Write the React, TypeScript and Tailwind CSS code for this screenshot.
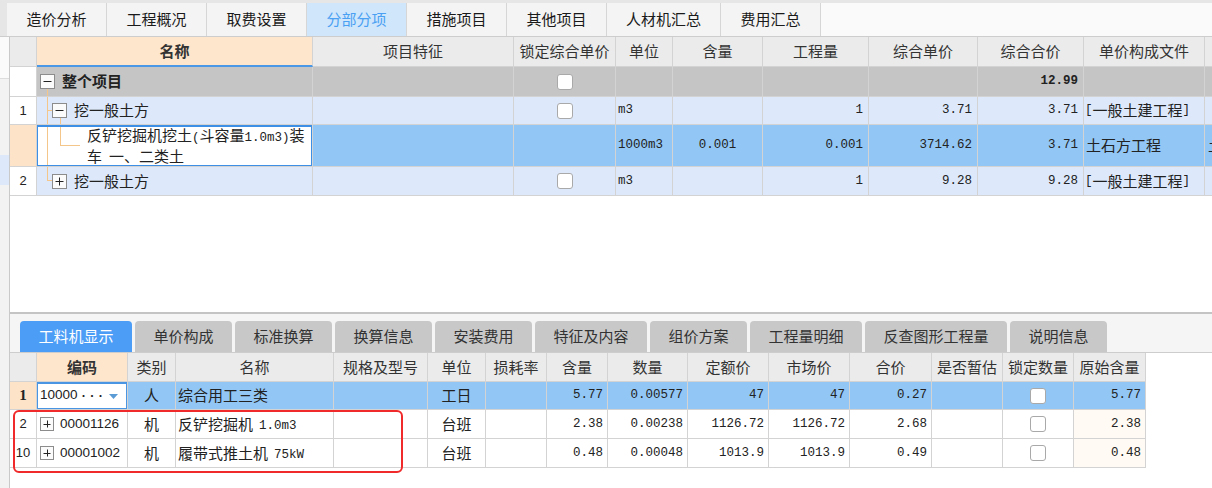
import React from "react";

const TOPG =
  "grid grid-cols-[27px_276px_201px_102px_57px_90px_106px_109px_106px_121px_100px] w-max";
const BOTG =
  "grid grid-cols-[27px_91px_48px_158px_94px_58px_61px_61px_80px_81px_81px_82px_71px_71px_72px] w-max";
const C =
  "border-r border-b border-[#d3d3d3] flex items-center overflow-hidden whitespace-nowrap";
const MONO = "font-['Liberation_Mono',monospace] text-[12.5px] text-[#222]";

function Box({ plus, size = 15 }: { plus?: boolean; size?: number }) {
  const m = size / 2;
  return (
    <svg width={size} height={size} viewBox={`0 0 ${size} ${size}`} className="shrink-0">
      <rect x="0.5" y="0.5" width={size - 1} height={size - 1} fill="#fbfbfb" stroke="#8c8c8c" />
      <path d={`M3.5 ${Math.floor(m) + 0.5}H${size - 3.5}`} stroke="#222" />
      {plus && <path d={`M${Math.floor(m) + 0.5} 3.5V${size - 3.5}`} stroke="#222" />}
    </svg>
  );
}

function Check() {
  return <div className="w-[16px] h-[16px] bg-white border border-[#a9a9a9] rounded-[3px]" />;
}

function Num({ v, bold }: { v: string; bold?: boolean }) {
  return <span className={`${MONO} ${bold ? "font-bold" : ""}`}>{v}</span>;
}

const TopTabs = ["造价分析", "工程概况", "取费设置", "分部分项", "措施项目", "其他项目", "人材机汇总", "费用汇总"];
const BotTabs: [string, string][] = [
  ["工料机显示", "w-[112px]"],
  ["单价构成", "w-[97px]"],
  ["标准换算", "w-[97px]"],
  ["换算信息", "w-[97px]"],
  ["安装费用", "w-[97px]"],
  ["特征及内容", "w-[112px]"],
  ["组价方案", "w-[97px]"],
  ["工程量明细", "w-[112px]"],
  ["反查图形工程量", "w-[142px]"],
  ["说明信息", "w-[97px]"],
];

const LINE = "absolute bg-[#f5c68a]";

export default function App() {
  return (
    <div className="w-[1212px] h-[488px] overflow-hidden bg-[#f0f0f0] flex flex-col font-['Noto_Sans_CJK_SC',sans-serif] text-[15px] text-[#222]">
      {/* top tab bar */}
      <div className="h-[37px] flex pl-[7px] pt-[3px] bg-[#e6e6e6] border-b border-[#cdcdcd] shrink-0">
        {TopTabs.map((t, i) => (
          <div
            key={t}
            className={`h-[33px] flex items-center justify-center border-r border-[#d6d6d6] ${
              i === 6 ? "w-[114px]" : "w-[100px]"
            } ${i === 3 ? "bg-[#cfe6fb] text-[#4aa0f2]" : "bg-[#f4f4f4] text-[#1a1a1a]"}`}
          >
            {t}
          </div>
        ))}
        <div className="flex-1 h-[33px] bg-[#fafafa]" />
      </div>

      <div className="flex flex-1 min-h-0">
        {/* left strip */}
        <div className="w-[10px] shrink-0 flex flex-col border-r border-[#c9c9c9] bg-[#f2f2f2]">
          <div className="h-[42px] bg-[#fafafa] border-b border-[#dcdcdc]" />
          <div className="h-[76px]" />
          <div className="h-[30px] bg-[#dde9fb]" />
          <div className="flex-1" />
        </div>

        <div className="flex-1 min-w-0 flex flex-col">
          {/* top grid */}
          <div className="h-[277px] shrink-0 bg-white overflow-hidden border-b-2 border-[#c4c4c4]">
            {/* header */}
            <div className={`${TOPG} h-[30px] bg-[#ebebeb] text-[#333]`}>
              <div className={C} />
              <div className={`${C} justify-center bg-[#fde6cb] font-bold border-b-2 border-b-[#4a98e6]`}>名称</div>
              <div className={`${C} justify-center`}>项目特征</div>
              <div className={`${C} justify-center`}>锁定综合单价</div>
              <div className={`${C} justify-center`}>单位</div>
              <div className={`${C} justify-center`}>含量</div>
              <div className={`${C} justify-center`}>工程量</div>
              <div className={`${C} justify-center`}>综合单价</div>
              <div className={`${C} justify-center`}>综合合价</div>
              <div className={`${C} justify-center`}>单价构成文件</div>
              <div className={C} />
            </div>
            {/* 整个项目 */}
            <div className={`${TOPG} h-[30px]`}>
              <div className={`${C} bg-white`} />
              <div className={`${C} relative bg-[#c5c5c5] pl-[3px]`}>
                <Box size={15} />
                <span className="ml-[7px] font-bold">整个项目</span>
                <div className={`${LINE} left-[10px] top-[22px] bottom-0 w-px`} />
              </div>
              <div className={`${C} bg-[#c5c5c5]`} />
              <div className={`${C} bg-[#c5c5c5] justify-center`}>
                <Check />
              </div>
              <div className={`${C} bg-[#c5c5c5]`} />
              <div className={`${C} bg-[#c5c5c5]`} />
              <div className={`${C} bg-[#c5c5c5]`} />
              <div className={`${C} bg-[#c5c5c5]`} />
              <div className={`${C} bg-[#c5c5c5] justify-end pr-[5px]`}>
                <Num v="12.99" bold />
              </div>
              <div className={`${C} bg-[#c5c5c5]`} />
              <div className={`${C} bg-[#c5c5c5]`} />
            </div>
            {/* row 1 */}
            <div className={`${TOPG} h-[28px]`}>
              <div className={`${C} bg-white justify-center text-[13px] font-['Liberation_Sans',sans-serif]`}>1</div>
              <div className={`${C} relative bg-[#dde9fb] pl-[15px]`}>
                <div className={`${LINE} left-[10px] top-0 bottom-0 w-px`} />
                <div className={`${LINE} left-[10px] top-[13px] h-px w-[5px]`} />
                <Box />
                <span className="ml-[7px]">挖一般土方</span>
                <div className={`${LINE} left-[23px] top-[21px] bottom-0 w-px`} />
              </div>
              <div className={`${C} bg-[#dde9fb]`} />
              <div className={`${C} bg-[#dde9fb] justify-center`}>
                <Check />
              </div>
              <div className={`${C} bg-[#dde9fb] pl-[2px]`}>
                <Num v="m3" />
              </div>
              <div className={`${C} bg-[#dde9fb]`} />
              <div className={`${C} bg-[#dde9fb] justify-end pr-[5px]`}>
                <Num v="1" />
              </div>
              <div className={`${C} bg-[#dde9fb] justify-end pr-[5px]`}>
                <Num v="3.71" />
              </div>
              <div className={`${C} bg-[#dde9fb] justify-end pr-[5px]`}>
                <Num v="3.71" />
              </div>
              <div className={`${C} bg-[#dde9fb] pl-[1px]`}>
                <Num v="[" />
                一般土建工程
                <Num v="]" />
              </div>
              <div className={`${C} bg-[#dde9fb]`} />
            </div>
            {/* selected row */}
            <div className={`${TOPG} h-[42px]`}>
              <div className={`${C} bg-[#fde4c8]`} />
              <div className={`${C} relative bg-white pl-[50px] leading-[18px]`}>
                <div className={`${LINE} left-[10px] top-0 bottom-0 w-px`} />
                <div className={`${LINE} left-[23px] top-0 h-[20px] w-px`} />
                <div className={`${LINE} left-[23px] top-[20px] h-px w-[20px]`} />
                <div>
                  <div>
                    反铲挖掘机挖土<Num v="(" />斗容量<Num v="1.0m3)" />装
                  </div>
                  <div>
                    车<span className="ml-[7px]">一、二类土</span>
                  </div>
                </div>
                <div className="absolute left-[-1px] right-[-1px] top-0 bottom-[-1px] border-2 border-[#3d8fe6]" />
              </div>
              <div className={`${C} bg-[#92c7f5]`} />
              <div className={`${C} bg-[#92c7f5]`} />
              <div className={`${C} bg-[#92c7f5] pl-[2px]`}>
                <Num v="1000m3" />
              </div>
              <div className={`${C} bg-[#92c7f5] justify-center`}>
                <Num v="0.001" />
              </div>
              <div className={`${C} bg-[#92c7f5] justify-end pr-[5px]`}>
                <Num v="0.001" />
              </div>
              <div className={`${C} bg-[#92c7f5] justify-end pr-[5px]`}>
                <Num v="3714.62" />
              </div>
              <div className={`${C} bg-[#92c7f5] justify-end pr-[5px]`}>
                <Num v="3.71" />
              </div>
              <div className={`${C} bg-[#92c7f5] pl-[2px]`}>土石方工程</div>
              <div className={`${C} bg-[#92c7f5] pl-[3px]`}>土</div>
            </div>
            {/* row 2 */}
            <div className={`${TOPG} h-[29px]`}>
              <div className={`${C} bg-white justify-center text-[13px] font-['Liberation_Sans',sans-serif]`}>2</div>
              <div className={`${C} relative bg-[#dde9fb] pl-[15px]`}>
                <div className={`${LINE} left-[10px] top-0 h-[14px] w-px`} />
                <div className={`${LINE} left-[10px] top-[13px] h-px w-[5px]`} />
                <Box plus />
                <span className="ml-[7px]">挖一般土方</span>
              </div>
              <div className={`${C} bg-[#dde9fb]`} />
              <div className={`${C} bg-[#dde9fb] justify-center`}>
                <Check />
              </div>
              <div className={`${C} bg-[#dde9fb] pl-[2px]`}>
                <Num v="m3" />
              </div>
              <div className={`${C} bg-[#dde9fb]`} />
              <div className={`${C} bg-[#dde9fb] justify-end pr-[5px]`}>
                <Num v="1" />
              </div>
              <div className={`${C} bg-[#dde9fb] justify-end pr-[5px]`}>
                <Num v="9.28" />
              </div>
              <div className={`${C} bg-[#dde9fb] justify-end pr-[5px]`}>
                <Num v="9.28" />
              </div>
              <div className={`${C} bg-[#dde9fb] pl-[1px]`}>
                <Num v="[" />
                一般土建工程
                <Num v="]" />
              </div>
              <div className={`${C} bg-[#dde9fb]`} />
            </div>
          </div>

          {/* bottom tabs */}
          <div className="h-[39px] shrink-0 bg-[#f5f5f5] border-b border-[#cdcdcd] flex items-end pl-[10px] gap-[3px]">
            {BotTabs.map(([t, w], i) => (
              <div
                key={t}
                className={`${w} h-[31px] rounded-t-[4px] flex items-center justify-center ${
                  i === 0 ? "bg-[#4b9df6] text-white" : "bg-[#c8c8c8] text-[#333]"
                }`}
              >
                {t}
              </div>
            ))}
          </div>

          {/* bottom grid */}
          <div className="flex-1 bg-white relative overflow-hidden">
            <div className={`${BOTG} h-[29px] bg-[#ebebeb] text-[#333]`}>
              <div className={C} />
              <div className={`${C} justify-center bg-[#fde6cb] font-bold`}>编码</div>
              <div className={`${C} justify-center`}>类别</div>
              <div className={`${C} justify-center`}>名称</div>
              <div className={`${C} justify-center`}>规格及型号</div>
              <div className={`${C} justify-center`}>单位</div>
              <div className={`${C} justify-center`}>损耗率</div>
              <div className={`${C} justify-center`}>含量</div>
              <div className={`${C} justify-center`}>数量</div>
              <div className={`${C} justify-center`}>定额价</div>
              <div className={`${C} justify-center`}>市场价</div>
              <div className={`${C} justify-center`}>合价</div>
              <div className={`${C} justify-center`}>是否暂估</div>
              <div className={`${C} justify-center`}>锁定数量</div>
              <div className={`${C} justify-center`}>原始含量</div>
            </div>
            {/* row 1 */}
            <div className={`${BOTG} h-[28px]`}>
              <div className={`${C} bg-[#fde4c8] justify-center font-['Liberation_Serif',serif] font-bold text-[15px]`}>1</div>
              <div className={`${C} relative bg-white pl-[3px]`}>
                <span className="font-['Liberation_Sans',sans-serif] text-[13.5px]">10000</span>
                <span className="text-[10px] tracking-[-1.5px] ml-[1px]">···</span>
                <svg width="9" height="6" viewBox="0 0 9 6" className="absolute left-[72px] top-[12px]">
                  <polygon points="0,0 9,0 4.5,5" fill="#5b9bd5" />
                </svg>
                <div className="absolute left-[-1px] right-[-1px] top-0 bottom-[-1px] border-2 border-[#4a94e4]" />
              </div>
              <div className={`${C} bg-[#92c7f5] justify-center`}>人</div>
              <div className={`${C} bg-[#92c7f5] pl-[2px]`}>综合用工三类</div>
              <div className={`${C} bg-[#92c7f5]`} />
              <div className={`${C} bg-[#92c7f5] justify-center`}>工日</div>
              <div className={`${C} bg-[#92c7f5]`} />
              <div className={`${C} bg-[#92c7f5] justify-end pr-[4px]`}>
                <Num v="5.77" />
              </div>
              <div className={`${C} bg-[#92c7f5] justify-end pr-[4px]`}>
                <Num v="0.00577" />
              </div>
              <div className={`${C} bg-[#92c7f5] justify-end pr-[4px]`}>
                <Num v="47" />
              </div>
              <div className={`${C} bg-[#92c7f5] justify-end pr-[4px]`}>
                <Num v="47" />
              </div>
              <div className={`${C} bg-[#92c7f5] justify-end pr-[4px]`}>
                <Num v="0.27" />
              </div>
              <div className={`${C} bg-[#92c7f5]`} />
              <div className={`${C} bg-[#92c7f5] justify-center`}>
                <Check />
              </div>
              <div className={`${C} bg-[#92c7f5] justify-end pr-[4px]`}>
                <Num v="5.77" />
              </div>
            </div>
            {[
              ["2", "00001126", "反铲挖掘机", "1.0m3", "2.38", "0.00238", "1126.72", "1126.72", "2.68"],
              ["10", "00001002", "履带式推土机", "75kW", "0.48", "0.00048", "1013.9", "1013.9", "0.49"],
            ].map((r) => (
              <div key={r[0]} className={`${BOTG} h-[29px]`}>
                <div className={`${C} justify-center text-[13px] font-['Liberation_Sans',sans-serif]`}>{r[0]}</div>
                <div className={`${C} pl-[3px]`}>
                  <Box plus size={14} />
                  <span className="ml-[6px] font-['Liberation_Sans',sans-serif] text-[13.5px]">{r[1]}</span>
                </div>
                <div className={`${C} justify-center`}>机</div>
                <div className={`${C} pl-[2px]`}>
                  {r[2]}
                  <span className="ml-[6px]">
                    <Num v={r[3]} />
                  </span>
                </div>
                <div className={C} />
                <div className={`${C} justify-center`}>台班</div>
                <div className={C} />
                <div className={`${C} justify-end pr-[4px]`}>
                  <Num v={r[4]} />
                </div>
                <div className={`${C} justify-end pr-[4px]`}>
                  <Num v={r[5]} />
                </div>
                <div className={`${C} justify-end pr-[4px]`}>
                  <Num v={r[6]} />
                </div>
                <div className={`${C} justify-end pr-[4px]`}>
                  <Num v={r[7]} />
                </div>
                <div className={`${C} justify-end pr-[4px]`}>
                  <Num v={r[8]} />
                </div>
                <div className={C} />
                <div className={`${C} justify-center`}>
                  <Check />
                </div>
                <div className={`${C} bg-[#fffaf3] justify-end pr-[4px]`}>
                  <Num v={r[4]} />
                </div>
              </div>
            ))}
            {/* annotation */}
            <div className="absolute left-[3px] top-[57px] w-[390px] h-[63px] border-2 border-[#f02a2a] rounded-[6px]" />
          </div>
        </div>
      </div>
    </div>
  );
}
